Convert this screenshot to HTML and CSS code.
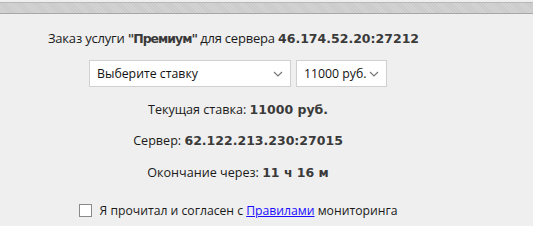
FILE: index.html
```html
<!DOCTYPE html>
<html>
<head>
<meta charset="utf-8">
<link rel="stylesheet" href="styles.css">
</head>
<body>
<div class="topbar"></div>
<div class="content">
  <p class="title">Заказ услуги <b class="tight">"Премиум"</b> для сервера <b>46.174.52.20:27212</b></p>
  <div class="selects">
    <div class="sel sel-wide"><span>Выберите ставку</span><svg class="chev" viewBox="0 0 10 6" width="10" height="6"><path d="M1 1l4 4 4-4" fill="none" stroke="#777" stroke-width="1.2"/></svg></div>
    <div class="sel sel-small"><span>11000 руб.</span><svg class="chev" viewBox="0 0 10 6" width="10" height="6"><path d="M1 1l4 4 4-4" fill="none" stroke="#777" stroke-width="1.2"/></svg></div>
  </div>
  <p class="line l1">Текущая ставка: <b>11000 руб.</b></p>
  <p class="line l2">Сервер: <b>62.122.213.230:27015</b></p>
  <p class="line l3">Окончание через: <b>11 ч 16 м</b></p>
  <div class="agree"><span class="box"></span><span>Я прочитал и согласен с <a href="#">Правилами</a> мониторинга</span></div>
</div>
</body>
</html>
```
FILE: styles.css
```css
html, body {
  margin: 0;
  padding: 0;
  background: #efefef;
  font-family: "Open Sans", "Noto Sans", sans-serif;
  font-size: 13px;
  color: #1a1a1a;
  height: 226px;
  overflow: hidden;
}
.topbar {
  margin-top: 2px;
  height: 10px;
  border-top: 1px solid #b8b8b8;
  border-bottom: 1px solid #a8a8a8;
  background: repeating-linear-gradient(45deg, #d4d4d4 0 1px, #cacaca 1px 2px);
}
.content {
  width: 476px;
  text-align: center;
}
.title {
  margin: 15px 0 0;
  padding-right: 9px;
  line-height: 18px;
  letter-spacing: -0.2px;
}
b {
  font-family: "DejaVu Sans", sans-serif;
  font-size: 12.5px;
  letter-spacing: 0;
  color: #3a3a3a;
}
b.tight {
  letter-spacing: -1px;
}
.selects {
  display: flex;
  justify-content: center;
  gap: 5px;
  margin-top: 12px;
}
.sel {
  box-sizing: border-box;
  height: 27px;
  background: #fff;
  border: 1px solid #d0d0d0;
  display: flex;
  align-items: center;
  justify-content: space-between;
  padding: 0 7px 0 7px;
  font-size: 12.3px;
  color: #111;
  white-space: nowrap;
}
.sel-wide { width: 202px; }
.sel-small { width: 91px; }
.chev { flex: none; }
.line {
  margin: 0;
  line-height: 18px;
  font-size: 12.6px;
}
.l1 { margin-top: 14px; }
.l2 { margin-top: 13px; }
.l3 { margin-top: 14px; }
.agree {
  display: flex;
  align-items: center;
  justify-content: center;
  gap: 8px;
  margin-top: 20px;
  font-size: 12.2px;
}
.box {
  width: 13px;
  height: 13px;
  border: 1px solid #8a8a8a;
  background: #fff;
  box-sizing: border-box;
}
a { color: #1a0dff; }
```
